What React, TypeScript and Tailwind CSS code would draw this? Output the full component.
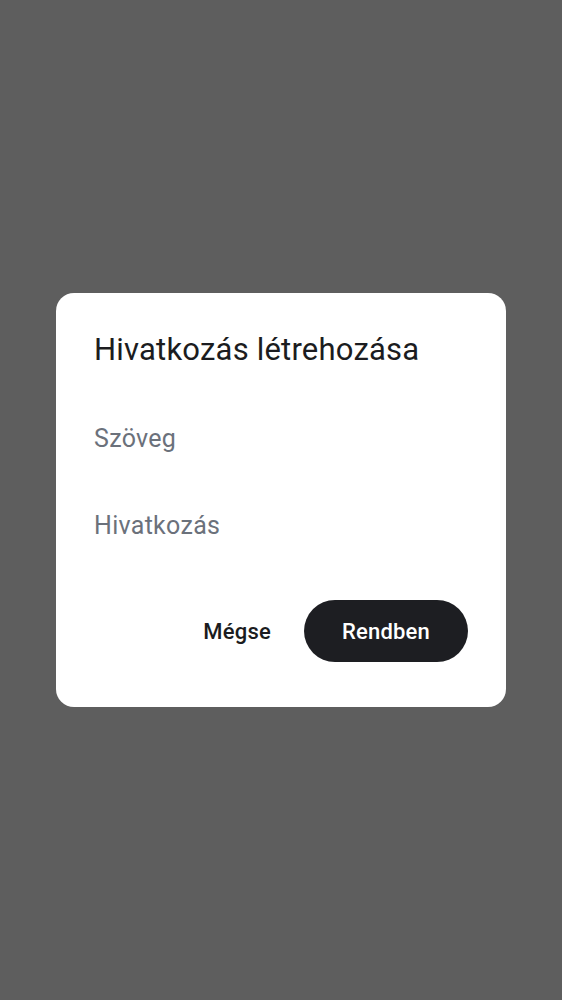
export default function App() {
  return (
    <div className="min-h-screen w-full bg-[#5e5e5e] flex items-center justify-center font-['Roboto',sans-serif]">
      <div className="w-[450px] bg-white rounded-[18px] pt-[39px] pb-[45px] px-[38px]">
        <h2 className="text-[31px] leading-[36px] text-[#1b1c20] font-normal tracking-[0.2px]">
          Hivatkozás létrehozása
        </h2>
        <div className="mt-[56px] text-[25px] leading-[30px] text-[#6b717b] tracking-[0.3px]">Szöveg</div>
        <div className="mt-[57px] text-[25px] leading-[30px] text-[#6b717b] tracking-[0.3px]">Hivatkozás</div>
        <div className="mt-[59px] flex items-center justify-end gap-[33px]">
          <button className="text-[22px] font-medium text-[#1b1c20] tracking-[0.2px]">Mégse</button>
          <button className="h-[62px] px-[38px] rounded-full bg-[#1d1e22] text-white text-[22px] font-medium tracking-[0.2px]">
            Rendben
          </button>
        </div>
      </div>
    </div>
  )
}
